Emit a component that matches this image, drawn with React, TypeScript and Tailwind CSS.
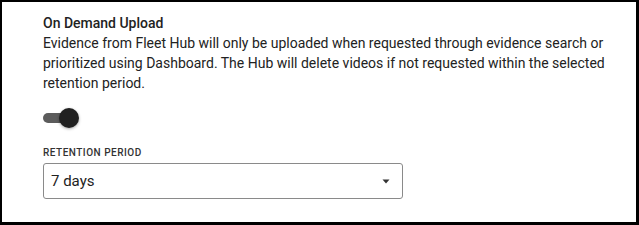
import React from "react";

export default function App() {
  return (
    <div
      className="w-[639px] h-[225px] bg-white border-black border-t-2 border-l-2 border-r-[3px] border-b-[3px] box-border"
      style={{ fontFamily: "Roboto, 'Liberation Sans', sans-serif" }}
    >
      <div className="pl-[41px] pt-[11px] flex flex-col text-[#222222]">
        <div className="text-[14px] leading-[20px] font-medium">On Demand Upload</div>
        <div className="text-[14px] leading-[20px] w-[580px]">
          Evidence from Fleet Hub will only be uploaded when requested through evidence search or
          prioritized using Dashboard. The Hub will delete videos if not requested within the selected
          retention period.
        </div>
        <div className="mt-[15px] relative w-[36px] h-[20px]">
          <div className="absolute left-0 top-[5px] w-[34px] h-[10px] rounded-full bg-[#5c5c5c]" />
          <div className="absolute left-[16px] top-0 w-[20px] h-[20px] rounded-full bg-[#202020] shadow-[0_1px_3px_rgba(0,0,0,0.35)]" />
        </div>
        <div className="mt-[19px] text-[10px] leading-[12px] font-medium tracking-[0.5px] text-[#333333]">
          RETENTION PERIOD
        </div>
        <div className="mt-[4px] w-[360px] h-[36px] border border-[#8a8a8a] rounded-[3px] flex items-center justify-between pl-[7px] pr-[12px]">
          <span className="text-[15px] leading-[20px] text-[#222222]">7 days</span>
          <svg width="8" height="5" viewBox="0 0 8 5">
            <path d="M0.5 0.5 L7.5 0.5 L4 4.5 Z" fill="#333333" />
          </svg>
        </div>
      </div>
    </div>
  );
}
